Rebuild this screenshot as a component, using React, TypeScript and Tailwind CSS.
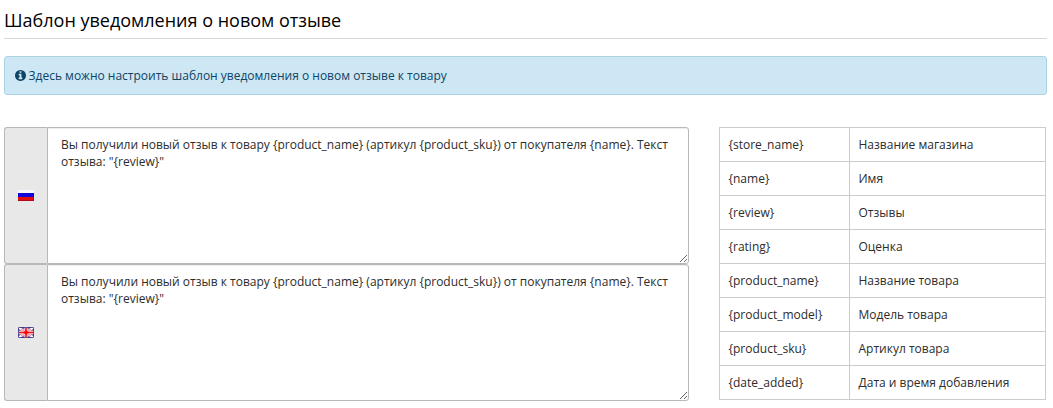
import type { ReactNode } from 'react';

const text = 'Вы получили новый отзыв к товару {product_name} (артикул {product_sku}) от покупателя {name}. Текст отзыва: "{review}"';

const rows = [
  ['{store_name}', 'Название магазина'],
  ['{name}', 'Имя'],
  ['{review}', 'Отзывы'],
  ['{rating}', 'Оценка'],
  ['{product_name}', 'Название товара'],
  ['{product_model}', 'Модель товара'],
  ['{product_sku}', 'Артикул товара'],
  ['{date_added}', 'Дата и время добавления'],
];

function InfoIcon() {
  return (
    <svg width="11" height="11" viewBox="0 128 1536 1536" fill="currentColor" className="shrink-0">
      <path d="M1024 1376v-160q0-14-9-23t-23-9h-96V672q0-14-9-23t-23-9H544q-14 0-23 9t-9 23v160q0 14 9 23t23 9h96v320h-96q-14 0-23 9t-9 23v160q0 14 9 23t23 9h448q14 0 23-9t9-23zM896 480V320q0-14-9-23t-23-9H672q-14 0-23 9t-9 23v160q0 14 9 23t23 9h192q14 0 23-9t9-23zM1536 896q0 209-103 385.5T1153.5 1561 768 1664t-385.5-103T103 1281.5 0 896t103-385.5T382.5 231 768 128t385.5 103T1433 510.5 1536 896z" />
    </svg>
  );
}

function RussianFlag() {
  return (
    <svg width="16" height="11" viewBox="0 0 16 11" shapeRendering="crispEdges">
      <rect width="16" height="3" fill="#f8f8fc" />
      <rect y="3" width="16" height="4" fill="#1408d8" />
      <rect y="7" width="16" height="4" fill="#e01010" />
      <path d="M0 10.5h16M15.5 7v4" stroke="#b00818" />
      <path d="M15.5 3v4" stroke="#1008a0" />
    </svg>
  );
}

function BritishFlag() {
  return (
    <svg width="16" height="11" viewBox="0 0 16 11">
      <rect width="16" height="11" fill="#7468a8" />
      <path d="M0 0l16 11M16 0L0 11" stroke="#fff" strokeWidth="2.2" />
      <path d="M8 0v11M0 5.5h16" stroke="#ffd0d8" strokeWidth="3.4" />
      <path d="M3 2l10 7M13 2L3 9" stroke="#f06070" strokeWidth="0.9" />
      <path d="M8 1v9M1 5.5h14" stroke="#f01818" strokeWidth="1.6" />
      <path d="M8 2.5l1 2 2.5 1-2.5 1-1 2-1-2-2.5-1 2.5-1z" fill="#f00" />
      <path d="M.5.5h15v10H.5z" fill="none" stroke="#382878" strokeOpacity="0.75" />
    </svg>
  );
}

function Editor({ flag }: { flag: ReactNode }) {
  return (
    <div className="flex h-[137px]">
      <div className="flex w-[43px] items-center justify-center rounded-l-[3px] border border-r-0 border-[#b8b8b8] bg-[#e8e8e8]">{flag}</div>
      <textarea
        defaultValue={text}
        spellCheck={false}
        className="block h-full w-[642px] resize rounded-r-[3px] border border-[#b8b8b8] bg-white px-[13px] py-2 text-xs leading-[17px] text-[#2c2c2c] shadow-[inset_0_1px_1px_rgba(0,0,0,0.075)] outline-none"
      />
    </div>
  );
}

export default function App() {
  return (
    <main className="h-[408px] overflow-hidden bg-white pl-1 font-['Open_Sans',sans-serif] text-xs text-[#2c2c2c]">
      <h1 className="h-[39px] w-[1043px] border-b border-[#d8d8d8] pt-2 text-lg leading-6 text-black">Шаблон уведомления о новом отзыве</h1>
      <div className="mt-[17px] flex h-[39px] w-[1043px] items-center gap-[3px] rounded-[3px] border border-[#a9d5e3] bg-[#cde7f4] px-[9.5px] text-[#0e4466]">
        <InfoIcon />
        <span>Здесь можно настроить шаблон уведомления о новом отзыве к товару</span>
      </div>
      <div className="mt-8 flex gap-[30px]">
        <div>
          <Editor flag={<RussianFlag />} />
          <Editor flag={<BritishFlag />} />
        </div>
        <table className="h-[273px] w-[327px] table-fixed border-collapse">
          <colgroup><col className="w-[130px]" /><col /></colgroup>
          <tbody>
            {rows.map(([code, label]) => (
              <tr key={code} className="h-[34px]">
                <td className="border border-[#ccc] px-[8.5px]">{code}</td>
                <td className="border border-[#ccc] px-[8.5px]">{label}</td>
              </tr>
            ))}
          </tbody>
        </table>
      </div>
    </main>
  );
}
